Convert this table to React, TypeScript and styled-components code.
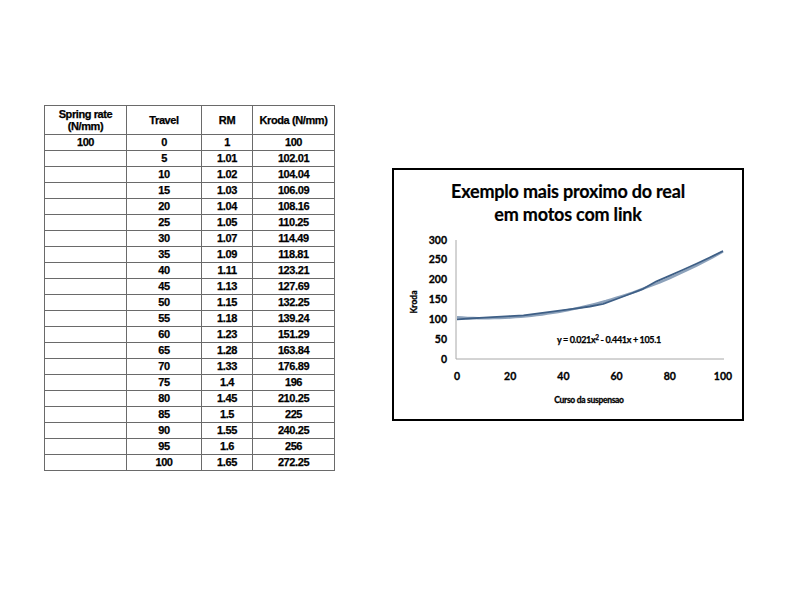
import React from "react";
import styled, { createGlobalStyle } from "styled-components";

const GlobalStyle = createGlobalStyle`
  html, body { margin: 0; padding: 0; background: #ffffff; }
  body { font-family: "Liberation Sans", Arial, sans-serif; color: #000; }
`;

const Page = styled.div`
  width: 800px;
  height: 600px;
  display: flex;
  align-items: flex-start;
  gap: 57px;
  padding: 105px 0 0 44px;
  box-sizing: border-box;
`;

const Table = styled.table`
  width: 290px;
  border-collapse: collapse;
  table-layout: fixed;
  flex: none;
  font-family: "Liberation Sans", Arial, sans-serif;
  font-weight: bold;
  font-size: 11px;
  letter-spacing: -0.4px;
  -webkit-text-stroke: 0.25px #000;
`;

const Col = styled.col<{ $w: number }>`
  width: ${(p) => p.$w}px;
`;

const Th = styled.th`
  height: 28px;
  padding: 0;
  border: 1px solid #6a6a6a;
  line-height: 12px;
  text-align: center;
  vertical-align: middle;
  font-weight: bold;
`;

const Td = styled.td`
  height: 15px;
  padding: 0;
  border: 1px solid #6a6a6a;
  line-height: 15px;
  text-align: center;
  vertical-align: middle;
`;

const ChartBox = styled.div`
  margin-top: 63px;
  width: 352px;
  height: 253px;
  flex: none;
  box-sizing: border-box;
  border: 2px solid #000;
  display: flex;
  flex-direction: column;
  background: #fff;
`;

const ChartTitle = styled.div`
  padding-top: 10px;
  text-align: center;
  font-family: Lato, "Open Sans", sans-serif;
  font-weight: bold;
  font-size: 18px;
  line-height: 23px;
  letter-spacing: -0.2px;
  height: 48px;
  -webkit-text-stroke: 0.2px #000;
`;

const Plot = styled.svg`
  display: block;
  width: 348px;
  height: 191px;
`;

const data: [number, number, string, string][] = [
  [0, 1, "1", "100"],
  [5, 1.01, "1.01", "102.01"],
  [10, 1.02, "1.02", "104.04"],
  [15, 1.03, "1.03", "106.09"],
  [20, 1.04, "1.04", "108.16"],
  [25, 1.05, "1.05", "110.25"],
  [30, 1.07, "1.07", "114.49"],
  [35, 1.09, "1.09", "118.81"],
  [40, 1.11, "1.11", "123.21"],
  [45, 1.13, "1.13", "127.69"],
  [50, 1.15, "1.15", "132.25"],
  [55, 1.18, "1.18", "139.24"],
  [60, 1.23, "1.23", "151.29"],
  [65, 1.28, "1.28", "163.84"],
  [70, 1.33, "1.33", "176.89"],
  [75, 1.4, "1.4", "196"],
  [80, 1.45, "1.45", "210.25"],
  [85, 1.5, "1.5", "225"],
  [90, 1.55, "1.55", "240.25"],
  [95, 1.6, "1.6", "256"],
  [100, 1.65, "1.65", "272.25"],
];

const X0 = 63;
const X1 = 329;
const Y0 = 131;
const Y300 = 12;
const px = (x: number) => X0 + (x / 100) * (X1 - X0);
const py = (y: number) => Y0 - (y / 300) * (Y0 - Y300);

const dataPts = data.map(([t, , , k]) => `${px(t).toFixed(1)},${py(parseFloat(k)).toFixed(1)}`).join(" ");
const trendPts = Array.from({ length: 51 }, (_, i) => {
  const x = i * 2;
  const y = 0.021 * x * x - 0.441 * x + 105.1;
  return `${px(x).toFixed(1)},${py(y).toFixed(1)}`;
}).join(" ");

const labelStyle = {
  fontFamily: "Lato, 'Open Sans', sans-serif",
  fontWeight: 700,
} as const;

export default function App() {
  return (
    <>
      <GlobalStyle />
      <Page>
        <Table>
          <colgroup>
            <Col $w={82} />
            <Col $w={75} />
            <Col $w={51} />
            <Col $w={82} />
          </colgroup>
          <thead>
            <tr>
              <Th>Spring rate (N/mm)</Th>
              <Th>Travel</Th>
              <Th>RM</Th>
              <Th>Kroda (N/mm)</Th>
            </tr>
          </thead>
          <tbody>
            {data.map(([t, , rm, k], i) => (
              <tr key={t}>
                <Td>{i === 0 ? "100" : ""}</Td>
                <Td>{t}</Td>
                <Td>{rm}</Td>
                <Td>{k}</Td>
              </tr>
            ))}
          </tbody>
        </Table>
        <ChartBox>
          <ChartTitle>
            Exemplo mais proximo do real
            <br />
            em motos com link
          </ChartTitle>
          <Plot viewBox="0 0 348 191">
            <line x1={X0 - 1} y1={Y300} x2={X0 - 1} y2={Y0} stroke="#a8a8a8" strokeWidth={1} />
            <line x1={X0 - 1} y1={Y0} x2={X1 + 1} y2={Y0} stroke="#a8a8a8" strokeWidth={1} />
            <g stroke="#000" strokeWidth={0.3}>
              {[0, 50, 100, 150, 200, 250, 300].map((v) => (
                <text key={v} x={53} y={py(v) + 3.5} textAnchor="end" fontSize={10.5} style={labelStyle}>
                  {v}
                </text>
              ))}
              {[0, 20, 40, 60, 80, 100].map((v) => (
                <text key={v} x={px(v)} y={152} textAnchor="middle" fontSize={10.5} style={labelStyle}>
                  {v}
                </text>
              ))}
              <text x={195} y={175} textAnchor="middle" fontSize={8.5} style={labelStyle} letterSpacing={-0.3}>
                Curso da suspensao
              </text>
              <text
                x={0}
                y={0}
                transform="translate(23 74) rotate(-90)"
                textAnchor="middle"
                fontSize={8.5}
                style={labelStyle}
              >
                Kroda
              </text>
            </g>
            <polyline points={trendPts} fill="none" stroke="#8da2bb" strokeWidth={2.5} strokeLinejoin="round" />
            <polyline points={dataPts} fill="none" stroke="#3e5f86" strokeWidth={1.8} strokeLinejoin="round" />
            <text x={163} y={115} fontSize={9} style={labelStyle} letterSpacing={-0.35} stroke="#000" strokeWidth={0.25}>
              y = 0.021x<tspan dy={-3} fontSize={6.5}>2</tspan>
              <tspan dy={3}> - 0.441x + 105.1</tspan>
            </text>
          </Plot>
        </ChartBox>
      </Page>
    </>
  );
}
